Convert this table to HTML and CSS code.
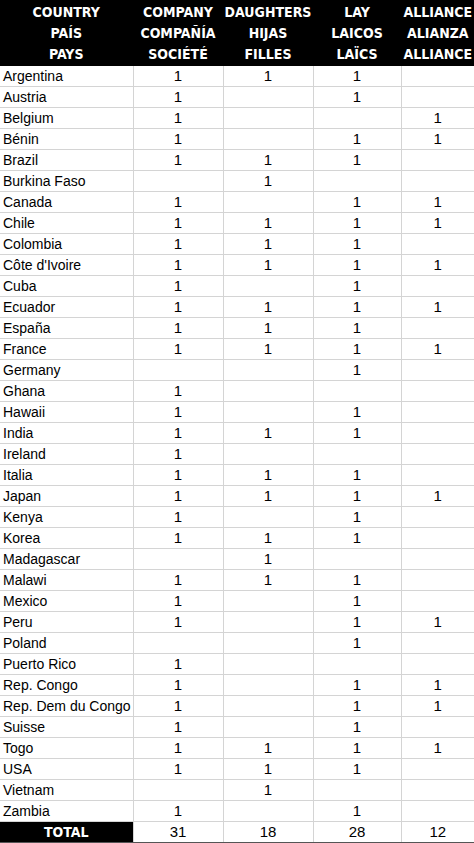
FILE: index.html
```html
<!DOCTYPE html>
<html>
<head>
<meta charset="utf-8">
<link rel="stylesheet" href="styles.css">
</head>
<body>
<table class="sheet">
  <colgroup>
    <col class="c-country">
    <col class="c-num">
    <col class="c-num">
    <col class="c-num4">
    <col class="c-num5">
  </colgroup>
  <thead>
    <tr class="head">
      <th>COUNTRY<br>PAÍS<br>PAYS</th>
      <th>COMPANY<br>COMPAÑÍA<br>SOCIÉTÉ</th>
      <th>DAUGHTERS<br>HIJAS<br>FILLES</th>
      <th>LAY<br>LAICOS<br>LAÏCS</th>
      <th>ALLIANCE<br>ALIANZA<br>ALLIANCE</th>
    </tr>
  </thead>
  <tbody>
    <tr><td>Argentina</td><td>1</td><td>1</td><td>1</td><td></td></tr>
    <tr><td>Austria</td><td>1</td><td></td><td>1</td><td></td></tr>
    <tr><td>Belgium</td><td>1</td><td></td><td></td><td>1</td></tr>
    <tr><td>Bénin</td><td>1</td><td></td><td>1</td><td>1</td></tr>
    <tr><td>Brazil</td><td>1</td><td>1</td><td>1</td><td></td></tr>
    <tr><td>Burkina Faso</td><td></td><td>1</td><td></td><td></td></tr>
    <tr><td>Canada</td><td>1</td><td></td><td>1</td><td>1</td></tr>
    <tr><td>Chile</td><td>1</td><td>1</td><td>1</td><td>1</td></tr>
    <tr><td>Colombia</td><td>1</td><td>1</td><td>1</td><td></td></tr>
    <tr><td>Côte d'Ivoire</td><td>1</td><td>1</td><td>1</td><td>1</td></tr>
    <tr><td>Cuba</td><td>1</td><td></td><td>1</td><td></td></tr>
    <tr><td>Ecuador</td><td>1</td><td>1</td><td>1</td><td>1</td></tr>
    <tr><td>España</td><td>1</td><td>1</td><td>1</td><td></td></tr>
    <tr><td>France</td><td>1</td><td>1</td><td>1</td><td>1</td></tr>
    <tr><td>Germany</td><td></td><td></td><td>1</td><td></td></tr>
    <tr><td>Ghana</td><td>1</td><td></td><td></td><td></td></tr>
    <tr><td>Hawaii</td><td>1</td><td></td><td>1</td><td></td></tr>
    <tr><td>India</td><td>1</td><td>1</td><td>1</td><td></td></tr>
    <tr><td>Ireland</td><td>1</td><td></td><td></td><td></td></tr>
    <tr><td>Italia</td><td>1</td><td>1</td><td>1</td><td></td></tr>
    <tr><td>Japan</td><td>1</td><td>1</td><td>1</td><td>1</td></tr>
    <tr><td>Kenya</td><td>1</td><td></td><td>1</td><td></td></tr>
    <tr><td>Korea</td><td>1</td><td>1</td><td>1</td><td></td></tr>
    <tr><td>Madagascar</td><td></td><td>1</td><td></td><td></td></tr>
    <tr><td>Malawi</td><td>1</td><td>1</td><td>1</td><td></td></tr>
    <tr><td>Mexico</td><td>1</td><td></td><td>1</td><td></td></tr>
    <tr><td>Peru</td><td>1</td><td></td><td>1</td><td>1</td></tr>
    <tr><td>Poland</td><td></td><td></td><td>1</td><td></td></tr>
    <tr><td>Puerto Rico</td><td>1</td><td></td><td></td><td></td></tr>
    <tr><td>Rep. Congo</td><td>1</td><td></td><td>1</td><td>1</td></tr>
    <tr><td>Rep. Dem du Congo</td><td>1</td><td></td><td>1</td><td>1</td></tr>
    <tr><td>Suisse</td><td>1</td><td></td><td>1</td><td></td></tr>
    <tr><td>Togo</td><td>1</td><td>1</td><td>1</td><td>1</td></tr>
    <tr><td>USA</td><td>1</td><td>1</td><td>1</td><td></td></tr>
    <tr><td>Vietnam</td><td></td><td>1</td><td></td><td></td></tr>
    <tr><td>Zambia</td><td>1</td><td></td><td>1</td><td></td></tr>
  </tbody>
  <tfoot>
    <tr class="total"><th>TOTAL</th><td>31</td><td>18</td><td>28</td><td>12</td></tr>
  </tfoot>
</table>
</body>
</html>
```
FILE: styles.css
```css
html, body {
  margin: 0;
  padding: 0;
  background: #fff;
}
.sheet {
  border-collapse: collapse;
  table-layout: fixed;
  width: 474px;
  font-family: "Liberation Sans", Arial, sans-serif;
  font-size: 15px;
  color: #000;
}
.c-country { width: 133px; }
.c-num { width: 90px; }
.c-num4 { width: 88px; }
.c-num5 { width: 73px; }

.head th {
  background: #000;
  color: #fff;
  font-family: "DejaVu Sans Condensed", "DejaVu Sans", sans-serif;
  font-stretch: condensed;
  font-weight: bold;
  font-size: 14px;
  line-height: 21px;
  height: 64px;
  padding: 0;
  text-align: center;
  vertical-align: middle;
  border: 1px solid #000;
}
tbody td {
  height: 20px;
  padding: 0;
  line-height: 20px;
  border: 1px solid #d4d4d4;
  text-align: center;
  white-space: nowrap;
}
tbody td:first-child {
  text-align: left;
  padding-left: 3px;
  font-size: 14px;
}
.total th {
  background: #000;
  color: #fff;
  font-family: "DejaVu Sans Condensed", "DejaVu Sans", sans-serif;
  font-stretch: condensed;
  font-weight: bold;
  font-size: 14px;
  height: 20px;
  padding: 0;
  text-align: center;
  border: 1px solid #d4d4d4;
  border-bottom: 2px solid #555;
}
.total td {
  height: 20px;
  padding: 0;
  line-height: 20px;
  text-align: center;
  border: 1px solid #d4d4d4;
  border-bottom: 2px solid #555;
}
.sheet tr > *:first-child { border-left: 0; }
.sheet tr > *:last-child { border-right: 0; }
```
